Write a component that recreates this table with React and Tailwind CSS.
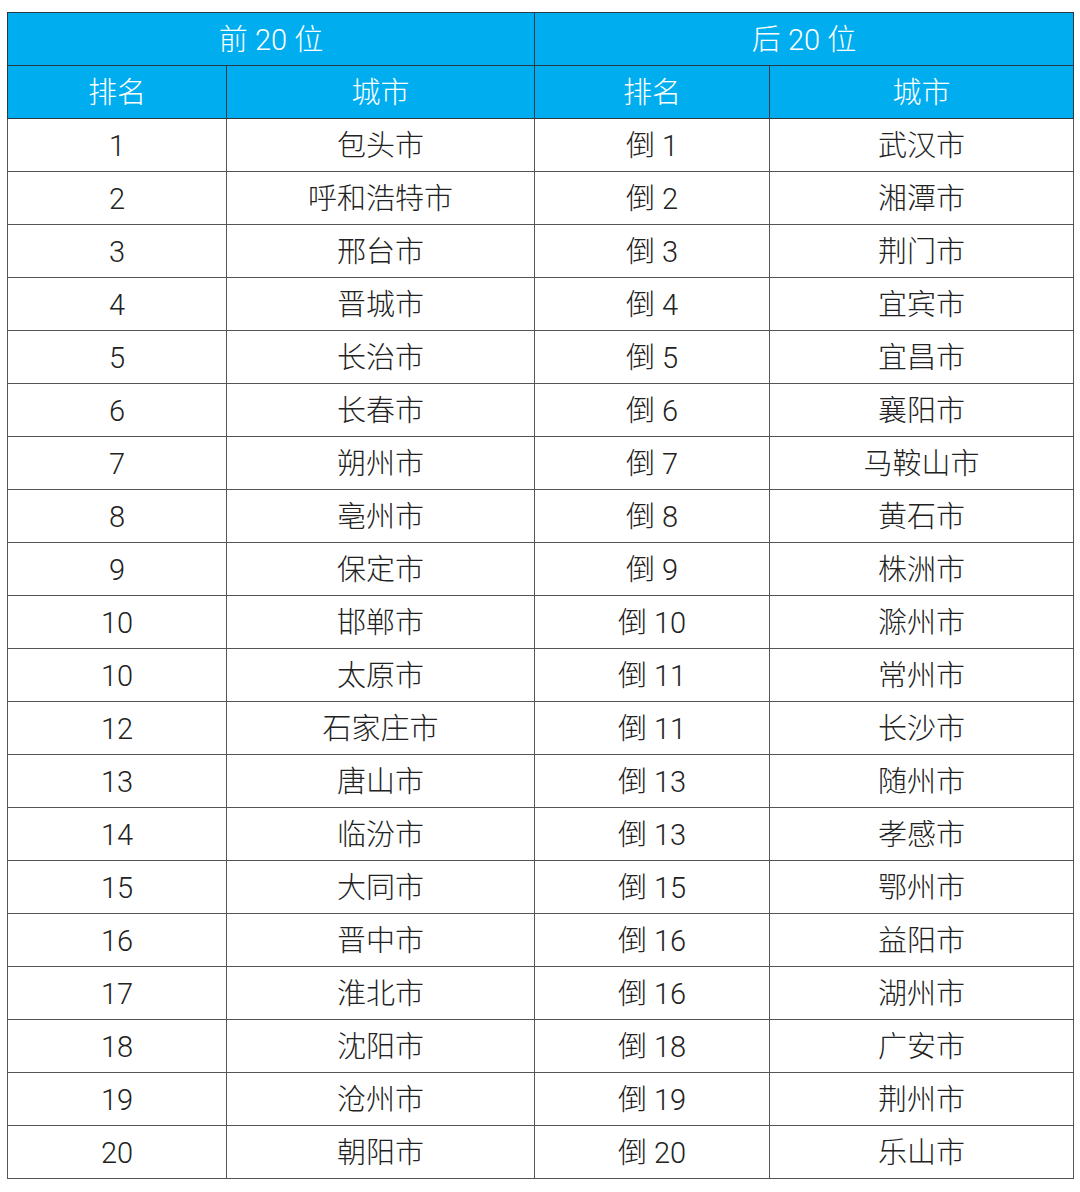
import React from 'react';

const top = ['包头市','呼和浩特市','邢台市','晋城市','长治市','长春市','朔州市','亳州市','保定市','邯郸市','太原市','石家庄市','唐山市','临汾市','大同市','晋中市','淮北市','沈阳市','沧州市','朝阳市'];
const topRank = ['1','2','3','4','5','6','7','8','9','10','10','12','13','14','15','16','17','18','19','20'];
const bottom = ['武汉市','湘潭市','荆门市','宜宾市','宜昌市','襄阳市','马鞍山市','黄石市','株洲市','滁州市','常州市','长沙市','随州市','孝感市','鄂州市','益阳市','湖州市','广安市','荆州市','乐山市'];
const bottomRank = ['1','2','3','4','5','6','7','8','9','10','11','11','13','13','15','16','16','18','19','20'];

const App = () => {
    return (
        <div className="w-[1080px] h-[1192px] bg-white pt-[12px] pl-[7px]" style={{ fontFamily: 'Roboto, "Noto Sans CJK SC", sans-serif' }}>
            <table className="table-fixed border-collapse w-[1066px] text-[29px] font-light text-[#222]">
                <colgroup>
                    <col className="w-[219px]" />
                    <col className="w-[308px]" />
                    <col className="w-[235px]" />
                    <col className="w-[304px]" />
                </colgroup>
                <thead className="bg-[#00aeef] text-white">
                    <tr className="h-[53px]">
                        <th colSpan={2} className="border border-[#2a3a44] font-light pt-[3px]">前 20 位</th>
                        <th colSpan={2} className="border border-[#2a3a44] font-light pt-[3px]">后 20 位</th>
                    </tr>
                    <tr className="h-[53px]">
                        <th className="border border-[#2a3a44] font-light pt-[4px]">排名</th>
                        <th className="border border-[#2a3a44] font-light pt-[4px]">城市</th>
                        <th className="border border-[#2a3a44] font-light pt-[4px]">排名</th>
                        <th className="border border-[#2a3a44] font-light pt-[4px]">城市</th>
                    </tr>
                </thead>
                <tbody>
                    {top.map((city, i) => (
                        <tr key={i} className="h-[53px] text-center">
                            <td className="border border-[#555] pt-[4px]">{topRank[i]}</td>
                            <td className="border border-[#555] pt-[4px]">{city}</td>
                            <td className="border border-[#555] pt-[4px]">倒 {bottomRank[i]}</td>
                            <td className="border border-[#555] pt-[4px]">{bottom[i]}</td>
                        </tr>
                    ))}
                </tbody>
            </table>
        </div>
    );
};

export default App;
